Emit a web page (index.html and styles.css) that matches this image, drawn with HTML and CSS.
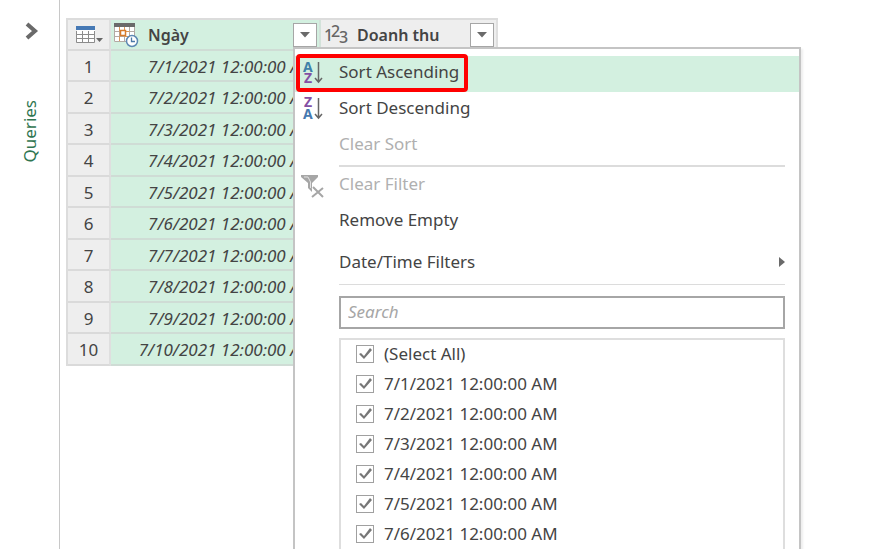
FILE: index.html
```html
<!DOCTYPE html>
<html lang="en">
<head>
<meta charset="utf-8">
<title>Query editor</title>
<link rel="stylesheet" href="styles.css">
</head>
<body>
<aside class="sidebar">
  <button class="expand" aria-label="Expand queries">
    <svg width="14" height="18" viewBox="0 0 14 18"><path d="M2 2L10 9L2 16" fill="none" stroke="#6a6a6a" stroke-width="4"/></svg>
  </button>
  <span class="pane-title">Queries</span>
</aside>
<main class="workspace">
  <table class="grid">
    <thead>
      <tr>
        <th class="corner">
          <button class="plain" aria-label="Table options">
            <svg width="30" height="20" viewBox="0 0 30 20">
              <path d="M1 2H19V17H1Z" fill="#fff"/>
              <path d="M0.500 6V17.500H18.500V6M1 9.500H18M1 13.500H18M6.500 6V17M12.500 6V17" fill="none" stroke="#8c8c8c"/>
              <path d="M0 1H19V5H0Z" fill="#4679b5"/>
              <path d="M20 13H27L23.500 17Z" fill="#666"/>
            </svg>
          </button>
        </th>
        <th class="date-head">
          <div class="head">
            <svg width="26" height="26" viewBox="0 0 26 26">
              <path d="M1 2H22V20H1Z" fill="#fff"/>
              <path d="M1.500 5V19.500H21.500V5M1 9.500H21M1 14.500H21M6.500 5V19M11.500 5V19M16.500 5V19" fill="none" stroke="#b3aaa4"/>
              <path d="M6.500 5V9.500M11.500 5V9.500H16.500M6.500 14.500V19M11.500 14.500H16.500" fill="none" stroke="#dc9a5b"/>
              <path d="M7.500 8.500H12.500V13.500H7.500Z" fill="#fff" stroke="#d67a2b" stroke-width="1.500"/>
              <path d="M1 1H22V5H1Z" fill="#6a6a6a"/>
              <circle cx="19" cy="19" r="5.500" fill="#fff" stroke="#5d88b3" stroke-width="1.500"/>
              <path d="M18.500 15.500V19.500H22" fill="none" stroke="#4d79a8" stroke-width="1.300"/>
            </svg>
            <span class="label">Ngày</span>
            <button class="drop" aria-label="Filter Ngày"><svg width="10" height="6" viewBox="0 0 10 6"><path d="M0 0H10L5 5.500Z" fill="#6a6a6a"/></svg></button>
          </div>
        </th>
        <th class="num-head">
          <div class="head">
            <svg class="type" width="25" height="28" viewBox="0 0 25 28">
              <text x="1" y="20">1</text><text x="8" y="16">2</text><text x="16" y="22">3</text>
            </svg>
            <span class="label">Doanh thu</span>
            <button class="drop" aria-label="Filter Doanh thu"><svg width="10" height="6" viewBox="0 0 10 6"><path d="M0 0H10L5 5.500Z" fill="#6a6a6a"/></svg></button>
          </div>
        </th>
      </tr>
    </thead>
    <tbody>
      <tr><th>1</th><td>7/1/2021 12:00:00 AM</td><td></td></tr>
      <tr><th>2</th><td>7/2/2021 12:00:00 AM</td><td></td></tr>
      <tr><th>3</th><td>7/3/2021 12:00:00 AM</td><td></td></tr>
      <tr><th>4</th><td>7/4/2021 12:00:00 AM</td><td></td></tr>
      <tr><th>5</th><td>7/5/2021 12:00:00 AM</td><td></td></tr>
      <tr><th>6</th><td>7/6/2021 12:00:00 AM</td><td></td></tr>
      <tr><th>7</th><td>7/7/2021 12:00:00 AM</td><td></td></tr>
      <tr><th>8</th><td>7/8/2021 12:00:00 AM</td><td></td></tr>
      <tr><th>9</th><td>7/9/2021 12:00:00 AM</td><td></td></tr>
      <tr><th>10</th><td>7/10/2021 12:00:00 AM</td><td></td></tr>
    </tbody>
  </table>

  <div class="menu">
    <button class="item active">
      <svg class="icon" width="24" height="28" viewBox="0 0 24 28">
        <text x="0" y="12" fill="#3f80a8">A</text><text x="1" y="23" fill="#8450a4">Z</text>
        <path d="M15.500 2V22M12 18L15.500 22L19 18" fill="none" stroke="#666" stroke-width="1.500"/>
      </svg>
      <span>Sort Ascending</span>
      <i class="callout"></i>
    </button>
    <button class="item">
      <svg class="icon" width="24" height="28" viewBox="0 0 24 28">
        <text x="1" y="11" fill="#8450a4">Z</text><text x="0" y="23" fill="#4679b0">A</text>
        <path d="M15.500 2V22M12 18L15.500 22L19 18" fill="none" stroke="#666" stroke-width="1.500"/>
      </svg>
      <span>Sort Descending</span>
    </button>
    <button class="item" disabled><span>Clear Sort</span></button>
    <hr class="thick">
    <button class="item" disabled>
      <svg class="icon" width="24" height="28" viewBox="0 0 24 28">
        <path d="M-2 3H15V5L9 11V20L5 16V11L-2 5Z" fill="#a6a6a6"/>
        <path d="M1 5H5L7.500 10V16" fill="none" stroke="#e2e2e2" stroke-width="1"/>
        <path d="M10 15L20 25M20 15L9 25" stroke="#fff" stroke-width="4"/>
        <path d="M10 15L20 25M20 16L9 25" stroke="#a6a6a6" stroke-width="2"/>
      </svg>
      <span>Clear Filter</span>
    </button>
    <button class="item">Remove Empty</button>
    <button class="item tall"><span>Date/Time Filters</span>
      <svg class="more" width="6" height="10" viewBox="0 0 6 10"><path d="M0 0L6 5L0 10Z" fill="#6a6a6a"/></svg>
    </button>
    <hr>
    <input class="search" type="text" placeholder="Search" aria-label="Search">
    <div class="values">
      <label><input type="checkbox" checked>(Select All)</label>
      <label><input type="checkbox" checked>7/1/2021 12:00:00 AM</label>
      <label><input type="checkbox" checked>7/2/2021 12:00:00 AM</label>
      <label><input type="checkbox" checked>7/3/2021 12:00:00 AM</label>
      <label><input type="checkbox" checked>7/4/2021 12:00:00 AM</label>
      <label><input type="checkbox" checked>7/5/2021 12:00:00 AM</label>
      <label><input type="checkbox" checked>7/6/2021 12:00:00 AM</label>
    </div>
  </div>
</main>
</body>
</html>
```
FILE: styles.css
```css
* { box-sizing: border-box; }

body {
  margin: 0;
  height: 100vh;
  display: flex;
  overflow: hidden;
  background: #fff;
  color: #444;
  font: 17px/24px "Noto Sans", sans-serif;
}

button, input {
  font: inherit;
  color: inherit;
  margin: 0;
}

.sidebar {
  flex: none;
  width: 60px;
  border-right: 1px solid #c8c8c8;
  display: flex;
  flex-direction: column;
  align-items: center;
  padding-top: 22px;
  gap: 60px;
}

.expand, .plain {
  display: flex;
  padding: 0;
  border: 0;
  background: none;
}

.expand { margin-left: 4px; }

.pane-title {
  writing-mode: vertical-rl;
  transform: rotate(180deg);
  color: #2f7550;
}

.workspace {
  flex: 1;
  position: relative;
  padding: 18px 0 0 6px;
}

.grid {
  width: 432px;
  table-layout: fixed;
  border-collapse: separate;
  border-spacing: 0;
  border-top: 2px solid #dcdcdc;
  border-left: 2px solid #dcdcdc;
}

.grid th, .grid td {
  padding: 0;
  height: 31px;
  border-right: 2px solid #dfdfdf;
  border-bottom: 2px solid #dadada;
  font-weight: 400;
}

.grid tr:nth-child(even) > * { height: 32px; }
.grid tbody th { background: #eee; padding-top: 2px; }
.grid thead th { background: #eee; }

.grid .corner { width: 43px; padding-left: 8px; }
.grid .date-head { width: 210px; }

.grid td:nth-child(2), .grid .date-head {
  background: #d3f0e0;
  border-right-color: #d3e2da;
  border-bottom-color: #cfdcd5;
}

.grid td {
  padding: 2px 5px 0 0;
  font-style: italic;
  text-align: right;
}

.head {
  display: flex;
  align-items: center;
  gap: 9px;
  height: 29px;
  padding: 0 2px;
}

.label {
  flex: 1;
  text-align: left;
  font-size: 16px;
  font-weight: 600;
}

.type text {
  font-size: 16px;
  font-weight: 500;
  fill: #666;
}

.drop {
  width: 24px;
  height: 24px;
  display: flex;
  align-items: center;
  justify-content: center;
  padding: 0;
  border: 1px solid #a6a6a6;
  background: #fff;
}

.menu {
  position: absolute;
  top: 47px;
  bottom: 0;
  left: 233px;
  width: 508px;
  display: flex;
  flex-direction: column;
  padding-top: 7px;
  border: 2px solid #c4c4c4;
  border-bottom: 0;
  background: #fff;
  box-shadow: 2px 2px 2px #eee;
}

.item {
  position: relative;
  flex: none;
  height: 36px;
  display: flex;
  align-items: center;
  padding: 0 14px 4px 44px;
  border: 0;
  background: none;
  text-align: left;
}

.item.active { background: #d3f0e0; }
.item:disabled { color: #b0b0b0; }
.item.tall { height: 45px; padding-bottom: 2px; }

.icon {
  position: absolute;
  left: 8px;
  top: 4px;
  overflow: visible;
}

.icon text {
  font: 700 14px "Noto Sans", sans-serif;
}

.callout {
  position: absolute;
  left: 1px;
  top: -2px;
  width: 172px;
  height: 38px;
  border: 4px solid #f00;
  border-radius: 4px;
}

.more { margin-left: auto; }

hr {
  flex: none;
  margin: 0 14px 0 44px;
  border: 0;
  border-top: 1px solid #dcdcdc;
}

hr.thick {
  margin-top: 1px;
  margin-bottom: 1px;
  border-top-width: 2px;
}

.search {
  flex: none;
  height: 33px;
  margin: 11px 14px 9px 44px;
  padding: 0 7px 2px;
  border: 2px solid #a6a6a6;
  background: #fff;
}

.item.tall + hr { margin-top: -1px; }

.search::placeholder {
  color: #a6a6a6;
  font-style: italic;
  opacity: 1;
}

.values {
  flex: 1;
  min-height: 0;
  overflow: hidden;
  display: flex;
  flex-direction: column;
  gap: 2px;
  margin: 0 14px 0 44px;
  padding-left: 15px;
  border: 2px solid #dedede;
  border-bottom: 0;
}

.values label {
  flex: none;
  height: 28px;
  display: flex;
  align-items: center;
  gap: 10px;
}

.values input {
  appearance: none;
  width: 18px;
  height: 18px;
  border: 1px solid #a0a0a0;
  background: #fff;
}

.values input:checked::before {
  content: "";
  display: block;
  width: 16px;
  height: 16px;
  background: #777;
  clip-path: polygon(2px 8px, 4px 7px, 7px 10px, 13px 2px, 15px 4px, 7px 13px);
}
```
